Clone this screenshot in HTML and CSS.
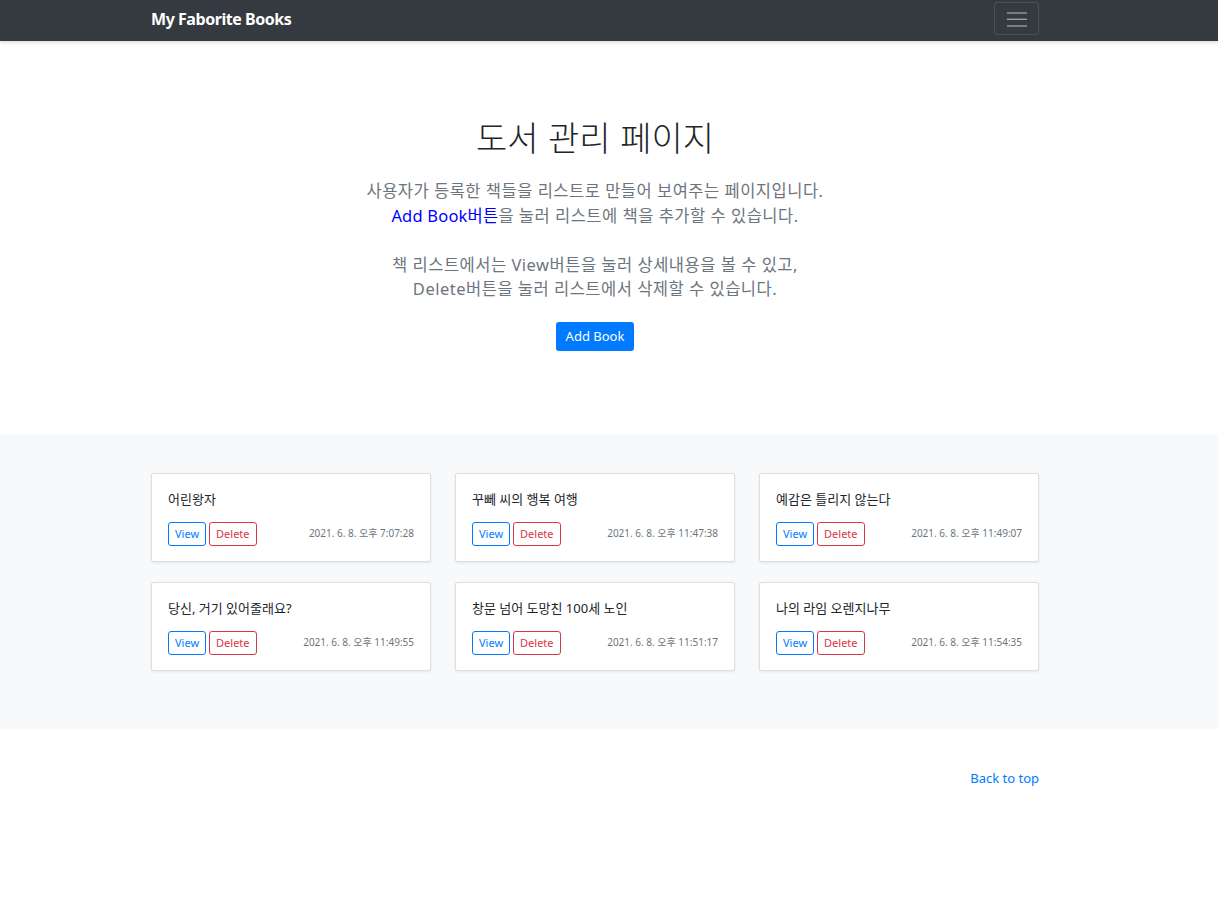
FILE: index.html
```html
<!DOCTYPE html>
<html lang="ko">
<head>
<meta charset="utf-8">
<title>My Faborite Books</title>
<link rel="stylesheet" href="styles.css">
</head>
<body>
<header class="navbar">
  <div class="container nav-inner">
    <a class="brand" href="#">My Faborite Books</a>
    <button class="toggler" type="button" aria-label="Toggle navigation">
      <svg width="20" height="16" viewBox="0 0 20 16"><g stroke="rgba(255,255,255,0.5)" stroke-width="1.4"><line x1="0" y1="2" x2="20" y2="2"/><line x1="0" y1="8.3" x2="20" y2="8.3"/><line x1="0" y1="15" x2="20" y2="15"/></g></svg>
    </button>
  </div>
</header>
<main>
  <section class="hero">
    <div class="container hero-inner">
      <h1 class="hero-title">도서 관리 페이지</h1>
      <p class="lead">사용자가 등록한 책들을 리스트로 만들어 보여주는 페이지입니다.<br><span class="hl">Add Book버튼</span>을 눌러 리스트에 책을 추가할 수 있습니다.<br><br>책 리스트에서는 View버튼을 눌러 상세내용을 볼 수 있고,<br>Delete버튼을 눌러 리스트에서 삭제할 수 있습니다.</p>
      <a class="btn-primary" href="#">Add Book</a>
    </div>
  </section>
  <section class="album">
    <div class="container grid">
      <div class="card"><p class="card-text">어린왕자</p><div class="card-foot"><div class="btns"><a class="btn-o view" href="#">View</a><a class="btn-o del" href="#">Delete</a></div><small class="time">2021. 6. 8. 오후 7:07:28</small></div></div>
      <div class="card"><p class="card-text">꾸뻬 씨의 행복 여행</p><div class="card-foot"><div class="btns"><a class="btn-o view" href="#">View</a><a class="btn-o del" href="#">Delete</a></div><small class="time">2021. 6. 8. 오후 11:47:38</small></div></div>
      <div class="card"><p class="card-text">예감은 틀리지 않는다</p><div class="card-foot"><div class="btns"><a class="btn-o view" href="#">View</a><a class="btn-o del" href="#">Delete</a></div><small class="time">2021. 6. 8. 오후 11:49:07</small></div></div>
      <div class="card"><p class="card-text">당신, 거기 있어줄래요?</p><div class="card-foot"><div class="btns"><a class="btn-o view" href="#">View</a><a class="btn-o del" href="#">Delete</a></div><small class="time">2021. 6. 8. 오후 11:49:55</small></div></div>
      <div class="card"><p class="card-text">창문 넘어 도망친 100세 노인</p><div class="card-foot"><div class="btns"><a class="btn-o view" href="#">View</a><a class="btn-o del" href="#">Delete</a></div><small class="time">2021. 6. 8. 오후 11:51:17</small></div></div>
      <div class="card"><p class="card-text">나의 라임 오렌지나무</p><div class="card-foot"><div class="btns"><a class="btn-o view" href="#">View</a><a class="btn-o del" href="#">Delete</a></div><small class="time">2021. 6. 8. 오후 11:54:35</small></div></div>
    </div>
  </section>
</main>
<footer class="footer">
  <div class="container foot-inner">
    <a class="top-link" href="#">Back to top</a>
  </div>
</footer>
</body>
</html>
```
FILE: styles.css
```css
* { box-sizing: border-box; }
html, body { margin: 0; padding: 0; }
body {
  font-family: "Noto Sans", "Noto Sans CJK KR", sans-serif;
  color: #212529;
  background: #fff;
  font-size: 13px;
  line-height: 1.5;
}
a { text-decoration: none; }
.container {
  width: 916px;
  padding-right: 28px;
  margin: 0 auto;
}
.navbar {
  background: #343a40;
  height: 41px;
  box-shadow: 0 2px 3px rgba(0,0,0,0.12);
  position: relative;
  z-index: 1;
}
.nav-inner {
  display: flex;
  justify-content: space-between;
  align-items: flex-start;
  height: 41px;
}
.brand {
  color: #fff;
  font-weight: 700;
  font-size: 16px;
  line-height: 20px;
  margin-top: 9px;
  letter-spacing: -0.45px;
}
.toggler {
  margin-top: 2px;
  width: 45px;
  height: 33px;
  background: transparent;
  border: 1px solid rgba(255,255,255,0.12);
  border-radius: 3px;
  display: flex;
  align-items: center;
  justify-content: center;
  padding: 0;
}
.hero {
  background: #fff;
  padding: 76px 0 83px;
}
.hero-inner {
  display: flex;
  flex-direction: column;
  align-items: center;
  text-align: center;
}
.hero-title {
  margin: 0;
  font-family: "Noto Sans CJK KR", sans-serif;
  font-weight: 300;
  font-size: 34px;
  line-height: 40px;
  color: #212529;
}
.lead {
  margin: 22px 0 20px;
  font-size: 16.5px;
  line-height: 24.5px;
  letter-spacing: 0.5px;
  color: #6c757d;
  font-weight: 400;
}
.hl { color: #0000ff; letter-spacing: 0.2px; }
.btn-primary {
  display: inline-block;
  background: #007bff;
  color: #fff;
  border-radius: 3px;
  font-size: 13px;
  line-height: 19px;
  padding: 5px 10px;
}
.album {
  background: #f8f9fa;
  padding: 39px 0 58px;
}
.grid {
  display: grid;
  grid-template-columns: repeat(3, 280px);
  column-gap: 24px;
  row-gap: 20px;
}
.card {
  background: #fff;
  border: 1px solid rgba(0,0,0,0.125);
  border-radius: 3px;
  box-shadow: 0 1px 3px rgba(0,0,0,0.08);
  padding: 16px;
  height: 89px;
}
.card-text {
  margin: 0 0 13px;
  font-size: 13px;
  line-height: 19px;
  color: #212529;
}
.card-foot {
  display: flex;
  justify-content: space-between;
  align-items: center;
}
.btns { display: flex; gap: 3px; }
.btn-o {
  display: inline-block;
  border: 1px solid;
  border-radius: 3px;
  font-size: 11px;
  line-height: 16px;
  padding: 3px 6px;
  background: #fff;
}
.view { color: #007bff; border-color: #007bff; }
.del { color: #dc3545; border-color: #dc3545; }
.time {
  font-size: 10px;
  color: #6c757d;
}
.footer {
  padding: 40px 0 38px;
}
.foot-inner {
  display: flex;
  justify-content: flex-end;
}
.top-link {
  color: #007bff;
  font-size: 13px;
  line-height: 19px;
}
```
